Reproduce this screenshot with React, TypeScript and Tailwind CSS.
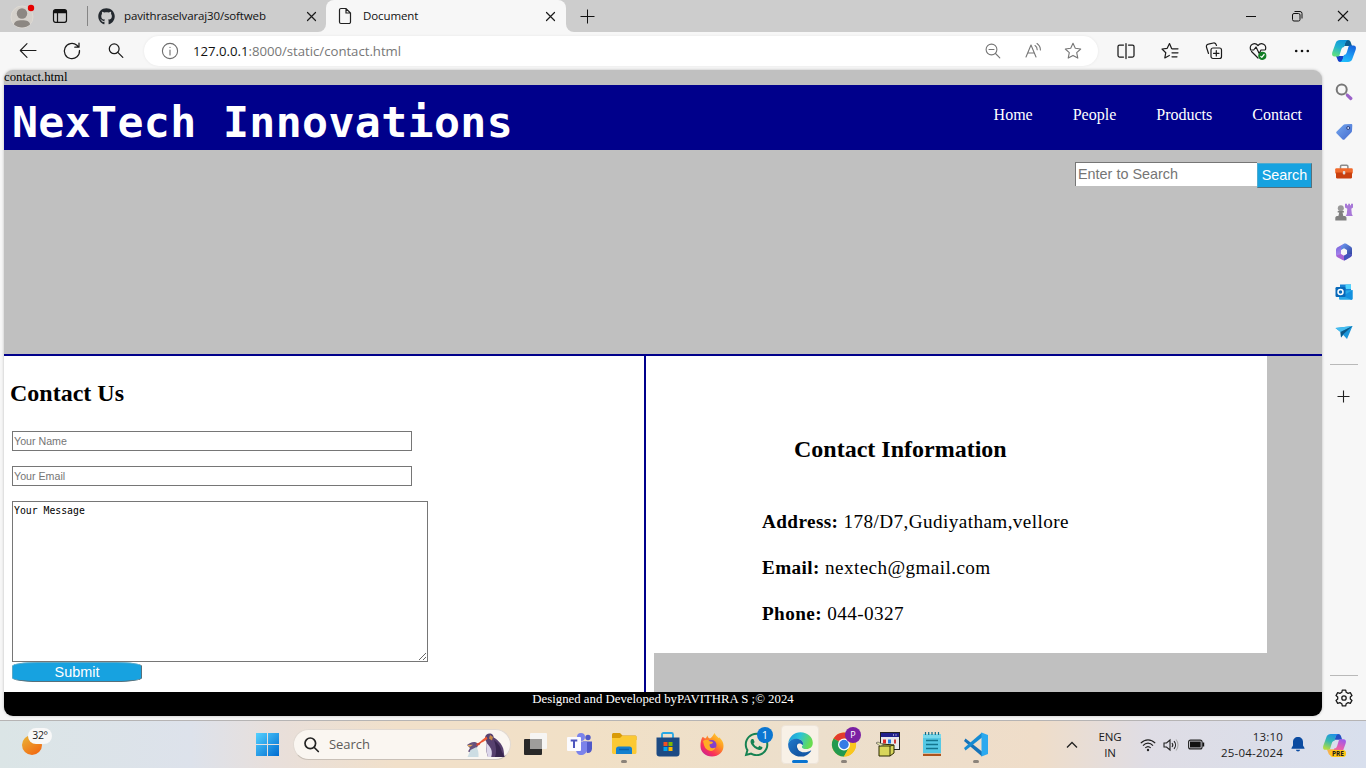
import React from "react";
import { FaGithub, FaWhatsapp } from "react-icons/fa";

type Kids = { children?: React.ReactNode };

const Line = ({ children, size = 20, color = "#1b1b1b", w = 1.1 }: Kids & { size?: number; color?: string; w?: number }) => (
  <svg width={size} height={size} viewBox="0 0 20 20" fill="none" stroke={color} strokeWidth={w} strokeLinecap="round" strokeLinejoin="round" className="shrink-0">
    {children}
  </svg>
);

const Cell = ({ children }: Kids) => <div className="flex h-full w-11 shrink-0 items-center justify-center">{children}</div>;

const Close = () => (
  <Line w={1.2}>
    <path d="M6.500 6.500l8 8M14.500 6.500l-8 8" />
  </Line>
);

const STAR = "M10 2.3l2.3 5 5.4.7-4 3.7 1.1 5.4L10 14.4l-4.8 2.7 1.1-5.4-4-3.7 5.4-.7z";

function TabBar() {
  return (
    <div className="flex h-8 shrink-0 items-center bg-[#f7f7f7]">
      <div className="flex h-full w-[326px] shrink-0 items-center rounded-br-lg bg-[#cdcdcd]">
        <svg width="28" height="28" viewBox="0 0 28 28" className="ml-2 shrink-0">
          <circle cx="14" cy="15" r="11" fill="#d5d1cb" stroke="#dedad4" />
          <circle cx="14" cy="11.5" r="5.2" fill="#8c8782" />
          <path d="M6 22.500c0-2.800 3-4.300 8-4.300s8 1.500 8 4.300c-2 2-5 3-8 3s-6-1-8-3z" fill="#8c8782" />
          <circle cx="23" cy="6" r="3.200" fill="#e60000" />
        </svg>
        <svg width="16" height="16" viewBox="0 0 16 16" className="ml-4 shrink-0">
          <rect x="1.500" y="1.700" width="13" height="12.600" rx="2" fill="none" stroke="#111" strokeWidth="1.200" />
          <path d="M1.500 5.200V3.700a2 2 0 012-2h9a2 2 0 012 2v1.500z" fill="#111" />
          <path d="M5.500 5v9" stroke="#111" strokeWidth="1.200" />
        </svg>
        <div className="ml-[19px] h-5 w-px bg-[#858585]" />
        <FaGithub size={17} color="#24292f" className="ml-[10px] shrink-0" />
        <span className="ml-[9px] w-[177px] whitespace-nowrap font-['Open_Sans',sans-serif] text-[11.5px] tracking-[-0.14px] text-[#111]">pavithraselvaraj30/softweb</span>
        <Close />
      </div>
      <div className="flex h-full shrink-0 bg-[#cdcdcd]">
        <div className="flex h-full w-60 shrink-0 items-center rounded-t-lg bg-[#f7f7f7]">
          <svg width="14" height="18" viewBox="0 0 14 18" fill="none" stroke="#222" strokeWidth="1.200" className="ml-3 shrink-0">
            <path d="M1.500 3a1.500 1.500 0 011.500-1.500h5l4.500 4.500v9a1.500 1.500 0 01-1.500 1.500H3A1.500 1.500 0 011.500 15zM8 1.500V6h4.500" />
          </svg>
          <span className="ml-[11px] w-[177px] font-['Open_Sans',sans-serif] text-[11.5px] tracking-[-0.1px] text-[#111]">Document</span>
          <Close />
        </div>
      </div>
      <div className="flex h-full grow items-center rounded-bl-lg bg-[#cdcdcd]">
        <Cell>
          <svg width="15" height="15" stroke="#111" className="-ml-0.5"><path d="M.5 7.500h14M7.500.5v14" /></svg>
        </Cell>
        <div className="ml-auto flex h-full">
          <div className="flex w-[46px] items-center justify-center"><svg width="12" height="12"><path d="M1 6.500h10" stroke="#111" /></svg></div>
          <div className="flex w-[46px] items-center justify-center">
            <svg width="12" height="12" fill="none" stroke="#111">
              <rect x="1.500" y="3.500" width="7.500" height="7.500" rx="1.500" />
              <path d="M3.500 1.500H9a2 2 0 012 2v5" />
            </svg>
          </div>
          <div className="flex w-[46px] items-center justify-center"><svg width="12" height="12" stroke="#111" strokeWidth="1.100"><path d="M1 1l10 10M11 1L1 11" /></svg></div>
        </div>
      </div>
    </div>
  );
}

const LOBE = "M8 1h9c-2.600 0-3.400 1.800-4 4l-.9 3c-1.500 0-2.400 1-3 3l-1.500 5c-.3 1-1 1.500-2 1.500H2.500C0 17.500-.3 15.500.4 13L3.800 3.700C4.500 2 6 1 8 1z";

function CopilotMark({ size, pre = false }: { size: number; pre?: boolean }) {
  const id = pre ? "pre" : "std";
  const c = pre ? ["#1f8fe8", "#35b8b0", "#b5dc40", "#f98a5c", "#e85fae", "#a05be8"] : ["#0f95dc", "#22b3cf", "#5fe07f", "#1fc0fb", "#1b95f2", "#1566dd"];
  return (
    <svg width={size} height={size} viewBox="0 0 24 24" className="shrink-0">
      <defs>
        <linearGradient id={id + "a"} x1="0.700" y1="0" x2="0.300" y2="1"><stop stopColor={c[0]} /><stop offset=".5" stopColor={c[1]} /><stop offset="1" stopColor={c[2]} /></linearGradient>
        <linearGradient id={id + "b"} x1="0.700" y1="0" x2="0.300" y2="1"><stop stopColor={c[3]} /><stop offset=".5" stopColor={c[4]} /><stop offset="1" stopColor={c[5]} /></linearGradient>
      </defs>
      <path d="M14 1h2c2 0 2.500 1.500 3 3l1 3h-8l1-3z" fill={pre ? "#2450c4" : "#0b5f91"} />
      <path d="M4 17h8l-1 3-1 3H8c-1.500 0-2-1-2.500-2.500z" fill={pre ? "#f7b34c" : "#1440c8"} />
      <path d={LOBE} fill={`url(#${id}a)`} />
      <path d={LOBE} fill={`url(#${id}b)`} transform="rotate(180 12 12)" />
    </svg>
  );
}

function Toolbar() {
  return (
    <div className="flex h-[38px] shrink-0 items-center bg-[#f7f7f7] pl-1.5">
      <Cell><Line><path d="M18 9.500H2.300M9 2.700L2.300 9.500 9 16.300" /></Line></Cell>
      <Cell><Line w={1.25}><path d="M17.500 9.500a7.600 7.600 0 11-2.600-5.200L16.500 6M17 2v4.200h-4.200" /></Line></Cell>
      <Cell><Line w={1.25}><circle cx="8.200" cy="7.800" r="4.900" /><path d="M11.800 11.400l5 5" /></Line></Cell>
      <div className="ml-1.5 flex h-[30px] w-[954px] shrink-0 items-center rounded-full bg-white shadow-[0_0_3px_rgba(0,0,0,0.07)]">
        <div className="ml-4"><Line color="#6d6d6d"><circle cx="10" cy="10" r="7.600" /><path d="M10 9v5M10 6.200v.3" /></Line></div>
        <span className="ml-[13px] pt-px whitespace-nowrap font-['Open_Sans',sans-serif] text-[13.200px] tracking-[-0.02px] text-[#777]"><span className="text-[#111]">127.0.0.1</span>:8000/static/contact.html</span>
        <div className="ml-auto flex pr-[5px]">
          <div className="flex w-10 justify-center"><Line color="#767676"><circle cx="8.500" cy="8.500" r="5.400" /><path d="M6 8.500h5M12.500 12.500l4.300 4.300" /></Line></div>
          <div className="flex w-10 justify-center"><Line color="#767676"><path d="M3 16L8 4l5 12M4.800 12h6.500M12 4.500a5 5 0 012.200 4.200M14 2.500a8 8 0 013.400 6.500" /></Line></div>
          <div className="flex w-10 justify-center"><Line color="#767676"><path d={STAR} /></Line></div>
        </div>
      </div>
      <div className="ml-1.5 flex h-full items-center">
        <Cell><Line w={1.25}><path d="M7.500 4H3.500A1.500 1.500 0 002 5.500v9A1.500 1.500 0 003.500 16h4M12.500 4h4A1.500 1.500 0 0118 5.500v9a1.500 1.500 0 01-1.500 1.500h-4M10 2.500v15" /></Line></Cell>
        <Cell><Line w={1.200}><path d="M11.600 7.400L9.500 2.500 7.200 7.300 2 8l3.800 3.700-1 5.200 4.500-2.500M12 7.800h6M12 11.800h6M12 15.800h5" /></Line></Cell>
        <Cell><Line w={1.200}><path d="M4.500 12.500L2.500 6.200C2 4.500 3 3.500 4.400 3.200l5-1.200c1.800-.4 2.600.6 3.100 2.500" /><rect x="7" y="7" width="10.500" height="10.500" rx="2" fill="#f7f7f7" /><path d="M12.300 9.500v5.500M9.500 12.300H15" /></Line></Cell>
        <Cell><Line w={1.200}><path d="M10 17L3.500 10.500M2.500 8.500C1.200 4 6.500.5 10 4.500c3.500-4 8.800-.5 7.500 4M2.500 9h3.200L8 6l3.200 6.500L13 9h4" /><circle cx="14.300" cy="14.800" r="3.500" fill="#117d24" stroke="#117d24" /><path d="M12.800 15.300l1 1 2.300-2.800" stroke="#fff" /></Line></Cell>
        <Cell><svg width="16" height="4" fill="#111"><circle cx="2.200" cy="2" r="1.300" /><circle cx="8" cy="2" r="1.300" /><circle cx="13.800" cy="2" r="1.300" /></svg></Cell>
        <div className="flex w-10 items-center justify-center"><CopilotMark size={24} /></div>
      </div>
    </div>
  );
}

function Page() {
  return (
    <div className="flex h-[646px] w-[1318px] shrink-0 flex-col overflow-hidden rounded-[9px] bg-[#c0c0c0] font-['Liberation_Serif',serif] text-black shadow-[0_0_3px_rgba(0,0,0,0.25)]">
      <div className="h-[15px] shrink-0 text-[12.800px] leading-[15px]">contact.html</div>
      <header className="flex h-[65px] shrink-0 items-center justify-between bg-[#00008b] pr-5 pl-[8px] text-white">
        <h1 className="pt-[9px] font-['DejaVu_Sans_Mono',monospace] text-[43.200px] leading-[56px] font-bold tracking-[0.37px] whitespace-nowrap">NexTech Innovations</h1>
        <nav className="flex gap-10 pb-[5px] text-base"><a>Home</a><a>People</a><a>Products</a><a>Contact</a></nav>
      </header>
      <section className="flex h-[206px] shrink-0 items-start justify-end border-b-2 border-[#00008b] pt-3 pr-[10px] font-['Liberation_Sans',sans-serif] text-[14.400px]">
        <input placeholder="Enter to Search" className="h-6 w-[182px] border-t border-l border-[#767676] bg-white px-0.5 pb-0.5 placeholder:text-[#757575]" />
        <button className="mt-px h-[25px] w-[55px] border border-t-[#4eabd0] border-r-[#56707b] border-b-[#56707b] border-l-[#4eabd0] bg-[#17a2e0] text-center leading-[21px] text-white">Search</button>
      </section>
      <main className="flex h-[336px] shrink-0">
        <section className="flex w-[642px] shrink-0 flex-col items-start border-r-2 border-[#00008b] bg-white pl-2">
          <h2 className="-ml-0.5 pt-[23px] text-[24px] leading-7 font-bold">Contact Us</h2>
          <input placeholder="Your Name" className="mt-6 h-5 w-[400px] border border-[#767676] px-px font-['Liberation_Sans',sans-serif] text-[10.670px] placeholder:text-[#757575]" />
          <input placeholder="Your Email" className="mt-[15px] h-5 w-[400px] border border-[#767676] px-px font-['Liberation_Sans',sans-serif] text-[10.670px] placeholder:text-[#757575]" />
          <textarea defaultValue="Your Message" className="mt-[15px] block h-[161px] w-[416px] shrink-0 resize border border-[#767676] px-px py-[2px] font-['DejaVu_Sans_Mono',monospace] text-[9.800px] leading-[13px]" />
          <button className="h-5 w-[130px] rounded-[20%] border border-t-[#5aa9c8] border-r-[#56707b] border-b-[#56707b] border-l-[#5aa9c8] bg-[#17a2e0] text-center font-['Liberation_Sans',sans-serif] text-[14.400px] leading-[18px] text-white">Submit</button>
        </section>
        <div className="w-2 shrink-0 bg-white" />
        <section className="h-[297px] w-[613px] bg-white pl-[108px]">
          <h2 className="pt-[79px] pl-8 text-[24px] leading-7 font-bold">Contact Information</h2>
          <div className="mt-[47px] flex flex-col gap-[22px] text-[19.200px] leading-6 tracking-[0.4px]">
            <p><b>Address:</b> 178/D7,Gudiyatham,vellore</p>
            <p><b>Email:</b> nextech@gmail.com</p>
            <p><b>Phone:</b> 044-0327</p>
          </div>
        </section>
      </main>
      <footer className="h-6 shrink-0 bg-black text-center text-[12.800px] leading-[15px] text-white">Designed and Developed byPAVITHRA S ;© 2024</footer>
    </div>
  );
}

const Side = ({ children }: Kids) => (
  <div className="flex h-10 items-center justify-center">
    <svg width="18" height="18" viewBox="0 0 18 18">{children}</svg>
  </div>
);

function Sidebar() {
  return (
    <aside className="flex w-11 shrink-0 flex-col pt-0.5">
      <Side><circle cx="6.700" cy="6.500" r="5" fill="none" stroke="#777" strokeWidth="2" /><path d="M10.300 10l2.500 2.500" stroke="#999" strokeWidth="1.500" /><path d="M12.500 12.300l3.300 3.200" stroke="#9b62c9" strokeWidth="3.200" strokeLinecap="round" /></Side>
      <Side>
        <defs><linearGradient id="tag" x2="1" y2="1"><stop stopColor="#74a7ed" /><stop offset="1" stopColor="#456bd0" /></linearGradient></defs>
        <path d="M10 1.200l6-.2c1 0 1.300.4 1.300 1.200L17 8c0 .6-.3 1-.7 1.400l-6.800 7c-.6.600-1.300.6-1.900 0L1.700 10.500c-.7-.7-.6-1.300 0-1.900l6.600-6.700c.5-.5 1-.7 1.700-.7z" fill="url(#tag)" /><circle cx="13.200" cy="5" r="1.500" fill="#c8dafa" stroke="#2c4384" />
      </Side>
      <Side><path d="M5.500 6V3.500c0-.8.500-1.200 1.200-1.200h5c.7 0 1.200.4 1.200 1.200V6" fill="none" stroke="#8b8b8b" strokeWidth="1.500" /><rect x=".2" y="5.200" width="17.600" height="5.500" rx="1.200" fill="#f06a2c" /><path d="M1 9.500h16v4.700c0 .8-.5 1.200-1.200 1.200H2.200c-.7 0-1.200-.4-1.200-1.200z" fill="#c9400f" /><rect x="7.800" y="8" width="2.500" height="3.500" rx="1" fill="#ddd" /></Side>
      <Side><path d="M10 .8h2v1.500h1.200V.8h1.800v1.500h1V.8h2v3.700l-1.700 1.300.5 5.200 1 2h-7l1-2 .5-5.200L10 4.500z" fill="#a878d8" /><circle cx="5.800" cy="5.300" r="3" fill="#999" /><path d="M2.700 8h6.200v1.500H7.500l.8 3.500h1.500c1 0 1.700 1 1.700 2v2.500H.3V15c0-1 .7-2 1.700-2h1.400l.8-3.500H2.700z" fill="#808080" /></Side>
      <Side>
        <defs>
          <linearGradient id="m1" x2="1" y2="1"><stop stopColor="#6f9df5" /><stop offset="1" stopColor="#2f3f9c" /></linearGradient>
          <linearGradient id="m2" y2="1" x2=".3"><stop stopColor="#6a5fd8" /><stop offset="1" stopColor="#b38bf0" /></linearGradient>
        </defs>
        <path d="M9.500.5L3 4C1.800 4.700 1 5.700 1 7v4.500c0 1.500 1 2.500 2.200 3L6 13l0-6.500 3-1.700V3z" fill="url(#m2)" />
        <path d="M9 .8c.8-.4 1.500-.4 2.300 0L15.500 3.500c1 .6 1.500 1.500 1.500 2.500v6.500l-5-1.600V7L9 5.300 6 7l0-3.500z" fill="url(#m1)" />
        <path d="M1.200 12.500c.4 1 1 1.600 1.800 2l4.500 2.500c1 .6 2 .6 3 0l4.700-2.700c1.200-.7 1.800-1.500 1.800-3L12 10.900l-3 1.800-3-1.800z" fill="#a763d6" /><path d="M9 17.400c.6 0 1-.1 1.500-.4l4.700-2.700c1.200-.7 1.800-1.500 1.800-3L12 10.900 9 12.700z" fill="#4353bd" />
      </Side>
      <Side><path d="M5 1.500h11v9H5z" fill="#1782d5" /><path d="M10.500 1.500H16V6h-5.500z" fill="#50d5ff" /><path d="M4 8l13.500-1v8.500c0 .8-.5 1.300-1.300 1.300H5.300c-.8 0-1.300-.5-1.300-1.300z" fill="#28a8e8" /><path d="M17.500 7L8 13l8.200 3.800c.8 0 1.300-.5 1.300-1.300z" fill="#1490df" /><rect x=".5" y="4" width="10" height="10" rx="1.200" fill="#0869b9" /><circle cx="5.500" cy="9" r="2.500" fill="none" stroke="#fff" strokeWidth="1.500" /></Side>
      <Side><path d="M.5 5L17.500 3 12 16 8.300 12 6 14.500 5.500 9z" fill="#1b96da" /><path d="M17.500 3L5.500 9 .5 5z" fill="#45bdf0" /><path d="M17.500 3L8 11.500 6 14.500 5.500 9z" fill="#0b5787" /></Side>
      <div className="mt-[12px] ml-2 h-px w-7 bg-[#b9b9b9]" />
      <div className="mt-[25px] flex justify-center"><svg width="14" height="14" stroke="#222" strokeWidth="1.100"><path d="M.5 6.500h12M6.500.5v12" /></svg></div>
      <div className="mt-[271px] ml-2 h-px w-7 bg-[#b9b9b9]" />
      <div className="mt-[12px] flex justify-center"><Line w={1.300}><circle cx="10" cy="10" r="2.200" /><path d="M8.300 2.100h3.400l.5 2.200 1.900 1.100 2.200-.7L18 7.600l-1.700 1.500v1.800l1.700 1.500-1.700 2.900-2.200-.7-1.900 1.100-.5 2.200H8.300l-.5-2.200-1.900-1.100-2.200.7L2 12.400l1.700-1.500V9.100L2 7.600l1.700-2.900 2.200.7 1.900-1.100z" /></Line></div>
    </aside>
  );
}

const App24 = ({ children, mark = false }: Kids & { mark?: boolean }) => (
  <div className="relative flex h-full w-11 shrink-0 items-center justify-center">
    <svg width="26" height="26" viewBox="0 0 26 26" className="overflow-visible">{children}</svg>
    {mark && <span className="absolute bottom-[5px] h-[3px] w-1.5 rounded-full bg-[#8b837a]" />}
  </div>
);

function Taskbar() {
  return (
    <div className="flex h-12 shrink-0 items-center border-t border-[#b6b4b4] bg-[linear-gradient(90deg,#dbe5e6_0%,#dde2eb_14%,#e8dfdb_20%,#f1e0ca_29%,#f1e0c6_43%,#ecdfcc_60%,#efddc9_76%,#dfdde5_84%,#d8dfed_100%)] font-['Open_Sans',sans-serif] text-[#1b1b1b]">
      <div className="relative ml-[22px] h-8 w-[223px] shrink-0">
        <svg width="20" height="20" className="mt-[6px]"><defs><linearGradient id="sun" x2=".7" y2="1"><stop stopColor="#e8b839" /><stop offset="1" stopColor="#f26a12" /></linearGradient></defs><circle cx="10" cy="10" r="10" fill="url(#sun)" /></svg>
        <span className="absolute -top-px left-[6px] flex h-4 w-6 items-center justify-center rounded-full bg-[#f8f8f8] text-[10.500px] tracking-[-0.3px]">32°</span>
      </div>
      <div className="flex w-11 shrink-0 justify-center">
        <svg width="24" height="24"><defs><linearGradient id="win" x2="1" y2="1"><stop stopColor="#54d1ff" /><stop offset="1" stopColor="#006bd0" /></linearGradient></defs><path d="M1 0h11v11H1zM13 0h11v11H13zM1 12h11v11H1zM13 12h11v11H13z" fill="url(#win)" /></svg>
      </div>
      <div className="ml-1 flex h-[31px] w-[218px] shrink-0 items-center rounded-full border border-[#e1d9d2] border-b-[#c9c0b7] bg-[#faf6f1] pl-2.5">
        <svg width="16" height="16" fill="none" stroke="#222" strokeWidth="1.700" strokeLinecap="round"><circle cx="6.300" cy="6.300" r="5.300" /><path d="M10.300 10.500l4 4" /></svg>
        <span className="ml-[9px] text-[13px] tracking-[-0.05px] text-[#5d5b59]">Search</span>
        <svg width="40" height="26" viewBox="0 0 40 26" className="mr-1 ml-auto">
          <path d="M19 5.500c.5-3 3-4.500 5.500-4 2.200.5 3 2 3.200 4 3.500 2 8 6 9.500 11 .8 3 .8 6 1.300 8.500H22c-1.500-4-2.200-8-1.500-11.500.4-2.500.2-4-1.500-6z" fill="#57416f" />
          <path d="M28 8c4 3 7 7 7.500 11l3 6H29c2-5 1-11-1-17z" fill="#38264f" />
          <path d="M20.700 11c2 2 4.500 5 5 8 .3 2.500 0 4.500-.5 6H22c-1.500-4.500-2-9-1.300-14z" fill="#dcd6ea" />
          <path d="M24 3l3 2-1 3.500-3-2z" fill="#c88a4a" />
          <path d="M20.500 4.500l1 2.500-4.500 3-5 2 4-4z" fill="#ee5a33" />
          <path d="M1 13c2-1.500 5-3.500 8-3 2 .5 3 1.500 3 3.500l-2 4-5 3-3-1 2-3.500z" fill="#66517d" />
          <path d="M10.500 11.500l3-1 2.500-1.500-2.500 4-3 1z" fill="#d74532" />
          <path d="M4.500 18l6-3c1.800 3 2.200 6 2 10H1.500z" fill="#cddde3" />
          <path d="M2 13l5-.3-2.500 1.800H2.200z" fill="#e6aa54" />
        </svg>
      </div>
      <div className="ml-[3px] flex h-full">
        <App24><rect x="1" y="7" width="18" height="16" rx="1" fill="#292929" /><rect x="7" y="1" width="17" height="16" rx="1" fill="#f6f5f3" /><path d="M7 7h12v10H7z" fill="#9e9d9b" /></App24>
        <App24><circle cx="14" cy="5" r="4" fill="#7b83eb" /><circle cx="21" cy="5.500" r="2.700" fill="#5059c9" /><path d="M16 9.500h9v7c0 3-2 5-5 4.500z" fill="#5059c9" /><path d="M9 9.500h11v8c0 3.500-3 5.500-6 5.500s-5-2-5-5.500z" fill="#7b83eb" /><rect x="0" y="5" width="14" height="14" rx="1" fill="#fbfbff" /><path d="M3.700 8.500h6.600M7 8.500V16" stroke="#4b53bc" strokeWidth="2" fill="none" /></App24>
        <App24 mark><path d="M1 3c0-1.500.5-2 2-2h6l2.500 2.500H24c1 0 1.500.5 1.500 1.500v3H1z" fill="#d99a08" /><path d="M1 6h8l2-2h13.500c.7 0 1 .4 1 1v15c0 1.500-.5 2-2 2H3c-1.500 0-2-.5-2-2z" fill="#fbc934" /><path d="M5 22v-5c0-1.500 1-2.500 2.500-2.500h11c1.500 0 2.500 1 2.500 2.500v5z" fill="#1380ce" /><path d="M8 17.500h10" stroke="#0b62a8" strokeWidth="1.500" /></App24>
        <App24><path d="M7 7V2.500C7 1.500 7.500 1 8.500 1h8c1 0 1.500.5 1.500 1.500V7" fill="none" stroke="#27a7e4" strokeWidth="1.800" /><path d="M1.500 5.500h23v16c0 2-1 3-3 3h-17c-2 0-3-1-3-3z" fill="#1c4a83" /><path d="M8.500 10h4v4h-4z" fill="#f25022" /><path d="M13.500 10h4v4h-4z" fill="#7fba00" /><path d="M8.500 15h4v4h-4z" fill="#00a4ef" /><path d="M13.500 15h4v4h-4z" fill="#ffb900" /></App24>
        <App24>
          <defs><linearGradient id="ff" x1="1" x2=".2" y2="1"><stop stopColor="#ffe83e" /><stop offset=".4" stopColor="#ff9820" /><stop offset=".75" stopColor="#fb3157" /><stop offset="1" stopColor="#c72196" /></linearGradient></defs>
          <path d="M3.500 5c1 0 2 .8 2.500 1.500C7.500 6 8 4 8.500 3.500c.2 1.500 1 2.500 2.500 3 2-1 3-3 4.500-5.500 1 2.500 2.500 3 4 5l1-.5c3 3 4 5.500 4 8.500 0 6-5 10.500-11.500 10.500S1.500 20 1.500 14c0-3.500.5-6.500 2-9z" fill="url(#ff)" /><circle cx="12.500" cy="13" r="5" fill="#8440cc" /><path d="M4 9c3-2 5-1.500 7 .5 2 0 3 .6 3 1-.5 1-2 1.500-3.500 2 0 3 2 5 6 3-1 3-4 4-6.500 3C5 17 5 12 4 9z" fill="#ffac25" />
        </App24>
        <div className="relative flex w-11 items-center justify-center"><FaWhatsapp size={27} color="#168252" /><span className="absolute top-[6px] left-[23px] flex size-4 items-center justify-center rounded-full bg-[#0b76d1] text-[11px] text-white">1</span></div>
        <div className="relative flex h-full w-11 items-center justify-center">
          <div className="absolute top-1 flex h-[39px] w-[38px] items-center justify-center rounded border border-[#ede4d9] bg-[#f8f1e7]">
            <svg width="25" height="25" viewBox="0 0 24 24">
              <defs><linearGradient id="ed" x2="1" y2=".3"><stop stopColor="#1c94dc" /><stop offset=".5" stopColor="#2bc3d8" /><stop offset="1" stopColor="#68dc50" /></linearGradient><linearGradient id="ed2" x2="1" y2="1"><stop stopColor="#2079cd" /><stop offset="1" stopColor="#104b94" /></linearGradient></defs>
              <path d="M.2 11C1 4.500 6 .3 12 .3c7 0 11.800 5 11.800 10 0 4-2.500 6-6 6-3 0-4.500-1-4.500-2 0-.6 1.200-1.300 1.200-3 0-2.700-2.500-4.500-6-4.500S1.500 8.500.2 11z" fill="url(#ed)" />
              <path d="M.2 11C1.500 7.800 5 6.300 8.500 6.500c3.500.2 6 2 6 4.800 0 .5-.2 1-.4 1.400-1.500-2-4-2.300-5.100-.7-1.500 3 1 9.500 7.500 11C7 25.500-.6 19 .2 11z" fill="url(#ed2)" />
              <path d="M9 10.500c-1.800 4.500 1.500 9 6.500 9 2.500 0 4.500-.7 6.300-1.800.4-.2.700.2.400.6-1.600 2.500-4 4.400-7 5C10 22.500 5.500 16 9 10.500z" fill="#155aa8" />
            </svg>
          </div>
          <span className="absolute bottom-[5px] h-[3px] w-4 rounded-full bg-[#0874d1]" />
        </div>
        <div className="relative flex h-full w-11">
          <App24 mark><circle cx="13" cy="12.500" r="12" fill="#f7c51e" /><path d="M13 12.500L2.600 6.500A12 12 0 0123.400 6.500z" fill="#e33b2e" /><path d="M13 12.500L2.600 6.500A12 12 0 0013 24.500l5-9z" fill="#239a4f" /><path d="M13 6.500h10.400a12 12 0 01-10.400 18l5-9z" fill="#f9c71e" /><circle cx="13" cy="12.500" r="6" fill="#fff" /><circle cx="13" cy="12.500" r="4.700" fill="#347be5" /></App24>
          <span className="absolute top-[6px] left-[23px] flex size-4 items-center justify-center rounded-full bg-[#7b20a3] text-[9px] text-white">P</span>
        </div>
        <App24><rect x="5.500" y=".5" width="19" height="17" fill="#e8e8ec" stroke="#222" /><path d="M6 1h18v4H6z" fill="#20208c" /><path d="M18 3h1M20.500 3h1" stroke="#fff" /><path d="M8 7.500h3v4H8z" fill="#e12a2a" /><path d="M13 7.500h3v4h-3z" fill="#237be0" /><path d="M19 7.500h2v4h-2z" fill="#d23a3a" /><path d="M4 14l3-2 12 1v8l-4 3H4z" fill="#d8d65b" stroke="#292900" /><path d="M4 14h11v10M15 14l4-1" fill="none" stroke="#333208" /><path d="M5 14L1 11l2-1 6 3z" fill="#e5e4ac" stroke="#444" strokeWidth=".6" /></App24>
        <App24><path d="M4 2h18v19H4z" fill="#55c8e4" /><path d="M4 2h18v4H4z" fill="#79d8eb" /><path d="M6.500 0v3M9.700 0v3M13 0v3M16.300 0v3M19.500 0v3" stroke="#176a85" strokeWidth="1.200" /><path d="M7 8.500h12M7 12.500h12M7 16.500h12" stroke="#13758e" strokeWidth="1.500" /><path d="M4 21h18v3H4z" fill="#c9bda8" /><path d="M4 22h18v2H4z" fill="#ae541d" /></App24>
        <App24 mark><path d="M2.500 6.500L19 19.500V24.500L1 9z" fill="#1572b8" /><path d="M2.500 18.500L19 5.500V.5L1 16z" fill="#168bd2" /><path d="M18.500.5L25 3v19l-6.500 2.500z" fill="#2ba9ef" /></App24>
      </div>
      <div className="ml-auto flex h-full items-center text-[11.500px] leading-4">
        <svg width="12" height="8" fill="none" stroke="#222" strokeWidth="1.300" className="mr-[20px]"><path d="M1 6.500L6 1.500l5 5" /></svg>
        <div className="mr-[18px] w-6 whitespace-nowrap text-center tracking-[-0.1px]">ENG<br />IN</div>
        <svg width="16" height="14" fill="none" stroke="#222" strokeWidth="1.200" className="mr-[7px]"><path d="M.8 5.200C5 .7 11 .7 15.200 5.200M3 7.600c3-3.200 7-3.200 10 0M5.300 9.900c1.700-1.700 3.700-1.700 5.400 0" /><circle cx="8" cy="12" r="1.200" fill="#222" stroke="none" /></svg>
        <svg width="16" height="14" fill="none" stroke="#222" strokeWidth="1.100" className="mr-[9px]"><path d="M1 5v4h2.500L7 12V2L3.500 5zM9 5c1 1.200 1 2.800 0 4M11 3.200c2 2.200 2 5.400 0 7.600" /><path d="M13 1.500c2.700 3 2.700 8 0 11" stroke="#aaa" /></svg>
        <svg width="17" height="12" className="mr-[15px]"><rect x=".6" y="1.100" width="13.500" height="8.800" rx="2" fill="none" stroke="#222" strokeWidth="1.100" /><rect x="2" y="2.500" width="10.700" height="6" fill="#111" /><path d="M14.500 3.500h1.700v4h-1.700z" fill="#111" /></svg>
        <div className="mr-2 w-[63px] text-right tracking-[0.2px] whitespace-nowrap"><div className="-ml-1">13:10</div><div className="-ml-1">25-04-2024</div></div>
        <svg width="14" height="16" fill="#0b4ba0" className="mr-[17px]"><path d="M7 0c3 0 5 2 5 5v3.500l1.500 2.500v.8H.5V11L2 8.500V5c0-3 2-5 5-5zM5 12.800h4c0 2.300-4 2.300-4 0z" /></svg>
        <div className="relative mr-5 flex size-6 items-center justify-center"><CopilotMark size={23} pre /><span className="absolute right-0 bottom-0 rounded-[3px] bg-[#ffc617] px-[2px] text-[6.500px] leading-[7px] font-bold">PRE</span></div>
      </div>
    </div>
  );
}

export default function App() {
  return (
    <div className="flex h-[768px] w-[1366px] flex-col overflow-hidden bg-[#f7f7f7]">
      <TabBar />
      <Toolbar />
      <div className="flex h-[650px] shrink-0 pl-1"><Page /><Sidebar /></div>
      <Taskbar />
    </div>
  );
}
